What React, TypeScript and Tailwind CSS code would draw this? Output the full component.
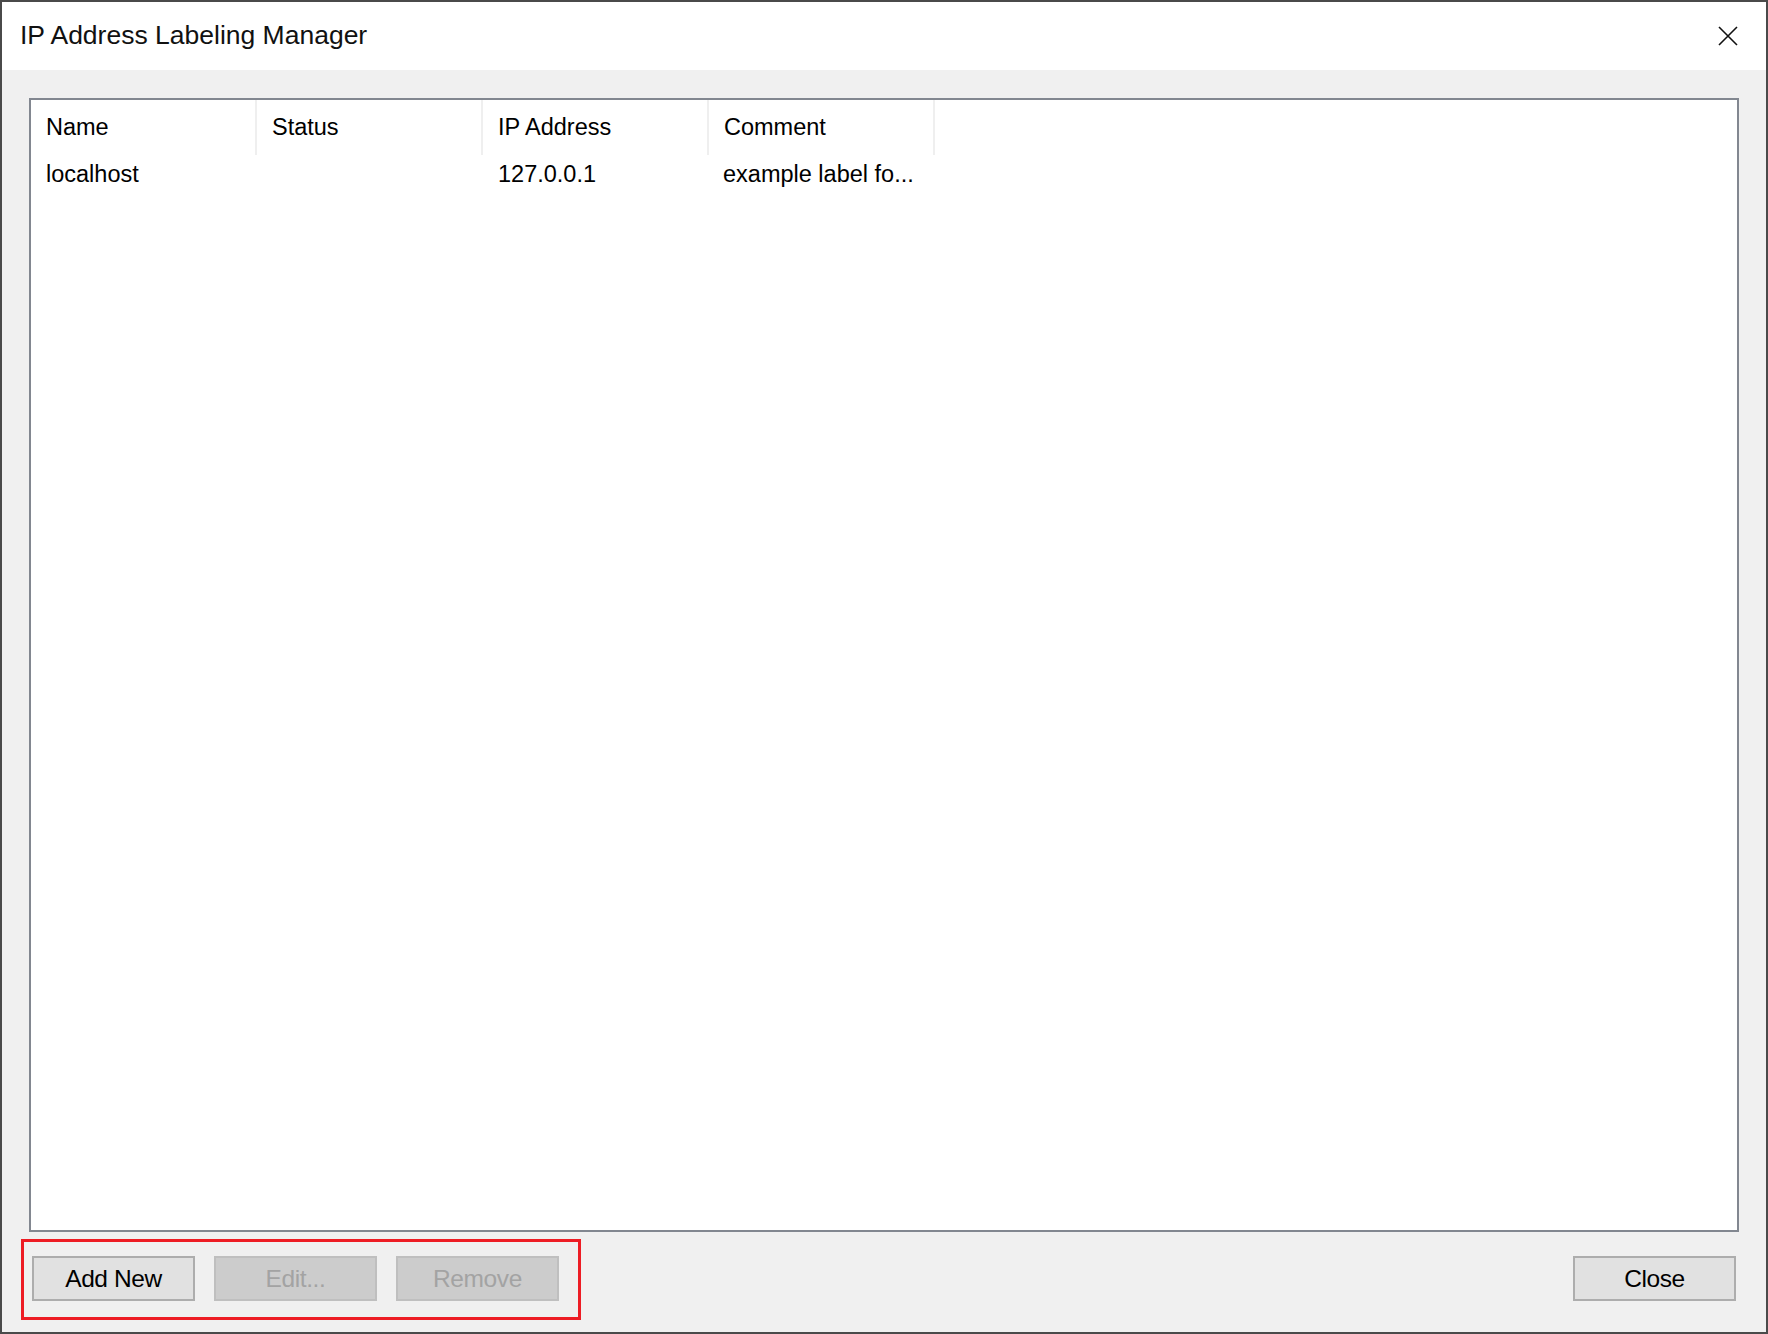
import React from "react";

const columns = ["Name", "Status", "IP Address", "Comment"];

const rows = [
  { name: "localhost", status: "", ip: "127.0.0.1", comment: "example label fo..." },
];

function WinButton({ label, disabled }: { label: string; disabled?: boolean }) {
  return (
    <button
      disabled={disabled}
      className={
        disabled
          ? "w-[163px] h-[45px] pt-[2px] border-2 border-[#bfbfbf] bg-[#cccccc] text-[#a3a3a3] text-[24.5px] leading-none tracking-[-0.4px]"
          : "w-[163px] h-[45px] pt-[2px] border-2 border-[#adadad] bg-[#e1e1e1] text-black text-[24.5px] leading-none tracking-[-0.4px]"
      }
    >
      {label}
    </button>
  );
}

export default function App() {
  return (
    <div
      className="relative w-[1768px] h-[1334px] flex flex-col border-2 border-[#4a4a4a] bg-[#f0f0f0]"
      style={{ fontFamily: '"Liberation Sans", Arial, sans-serif' }}
    >
      {/* ── Title bar ── */}
      <div className="h-[68px] shrink-0 bg-white flex items-center justify-between pl-[18px] pr-[27px]">
        <span className="text-[26.5px] text-[#111]">IP Address Labeling Manager</span>
        <svg width="22" height="22" viewBox="0 0 22 22" className="shrink-0">
          <path d="M2 2 L20 20 M20 2 L2 20" stroke="#111" strokeWidth="1.6" fill="none" />
        </svg>
      </div>

      {/* ── Body ── */}
      <div className="flex-1 flex flex-col px-[27px] pt-[28px]">
        {/* list view */}
        <div className="flex-1 bg-white border-2 border-[#828790]">
          <div className="flex h-[55px]">
            {columns.map((c) => (
              <div
                key={c}
                className="w-[226px] h-full flex items-center pl-[15px] border-r-2 border-[#efefef] text-[23.5px] text-black"
              >
                {c}
              </div>
            ))}
          </div>
          {rows.map((r) => (
            <div key={r.name} className="flex h-[40px] items-center text-[23.5px] text-black">
              <div className="w-[226px] pl-[15px]">{r.name}</div>
              <div className="w-[226px] pl-[15px]">{r.status}</div>
              <div className="w-[226px] pl-[15px]">{r.ip}</div>
              <div className="w-[226px] pl-[14px] truncate">{r.comment}</div>
            </div>
          ))}
        </div>

        {/* ── Footer buttons ── */}
        <div className="flex items-center justify-between mt-[24px] mb-[31px] px-[3px]">
          <div className="flex gap-[19px]">
            <WinButton label="Add New" />
            <WinButton label="Edit..." disabled />
            <WinButton label="Remove" disabled />
          </div>
          <WinButton label="Close" />
        </div>
      </div>

      {/* annotation highlight */}
      <div className="absolute left-[19px] top-[1237px] w-[560px] h-[81px] border-[3px] border-[#ed1c24] pointer-events-none" />
    </div>
  );
}
